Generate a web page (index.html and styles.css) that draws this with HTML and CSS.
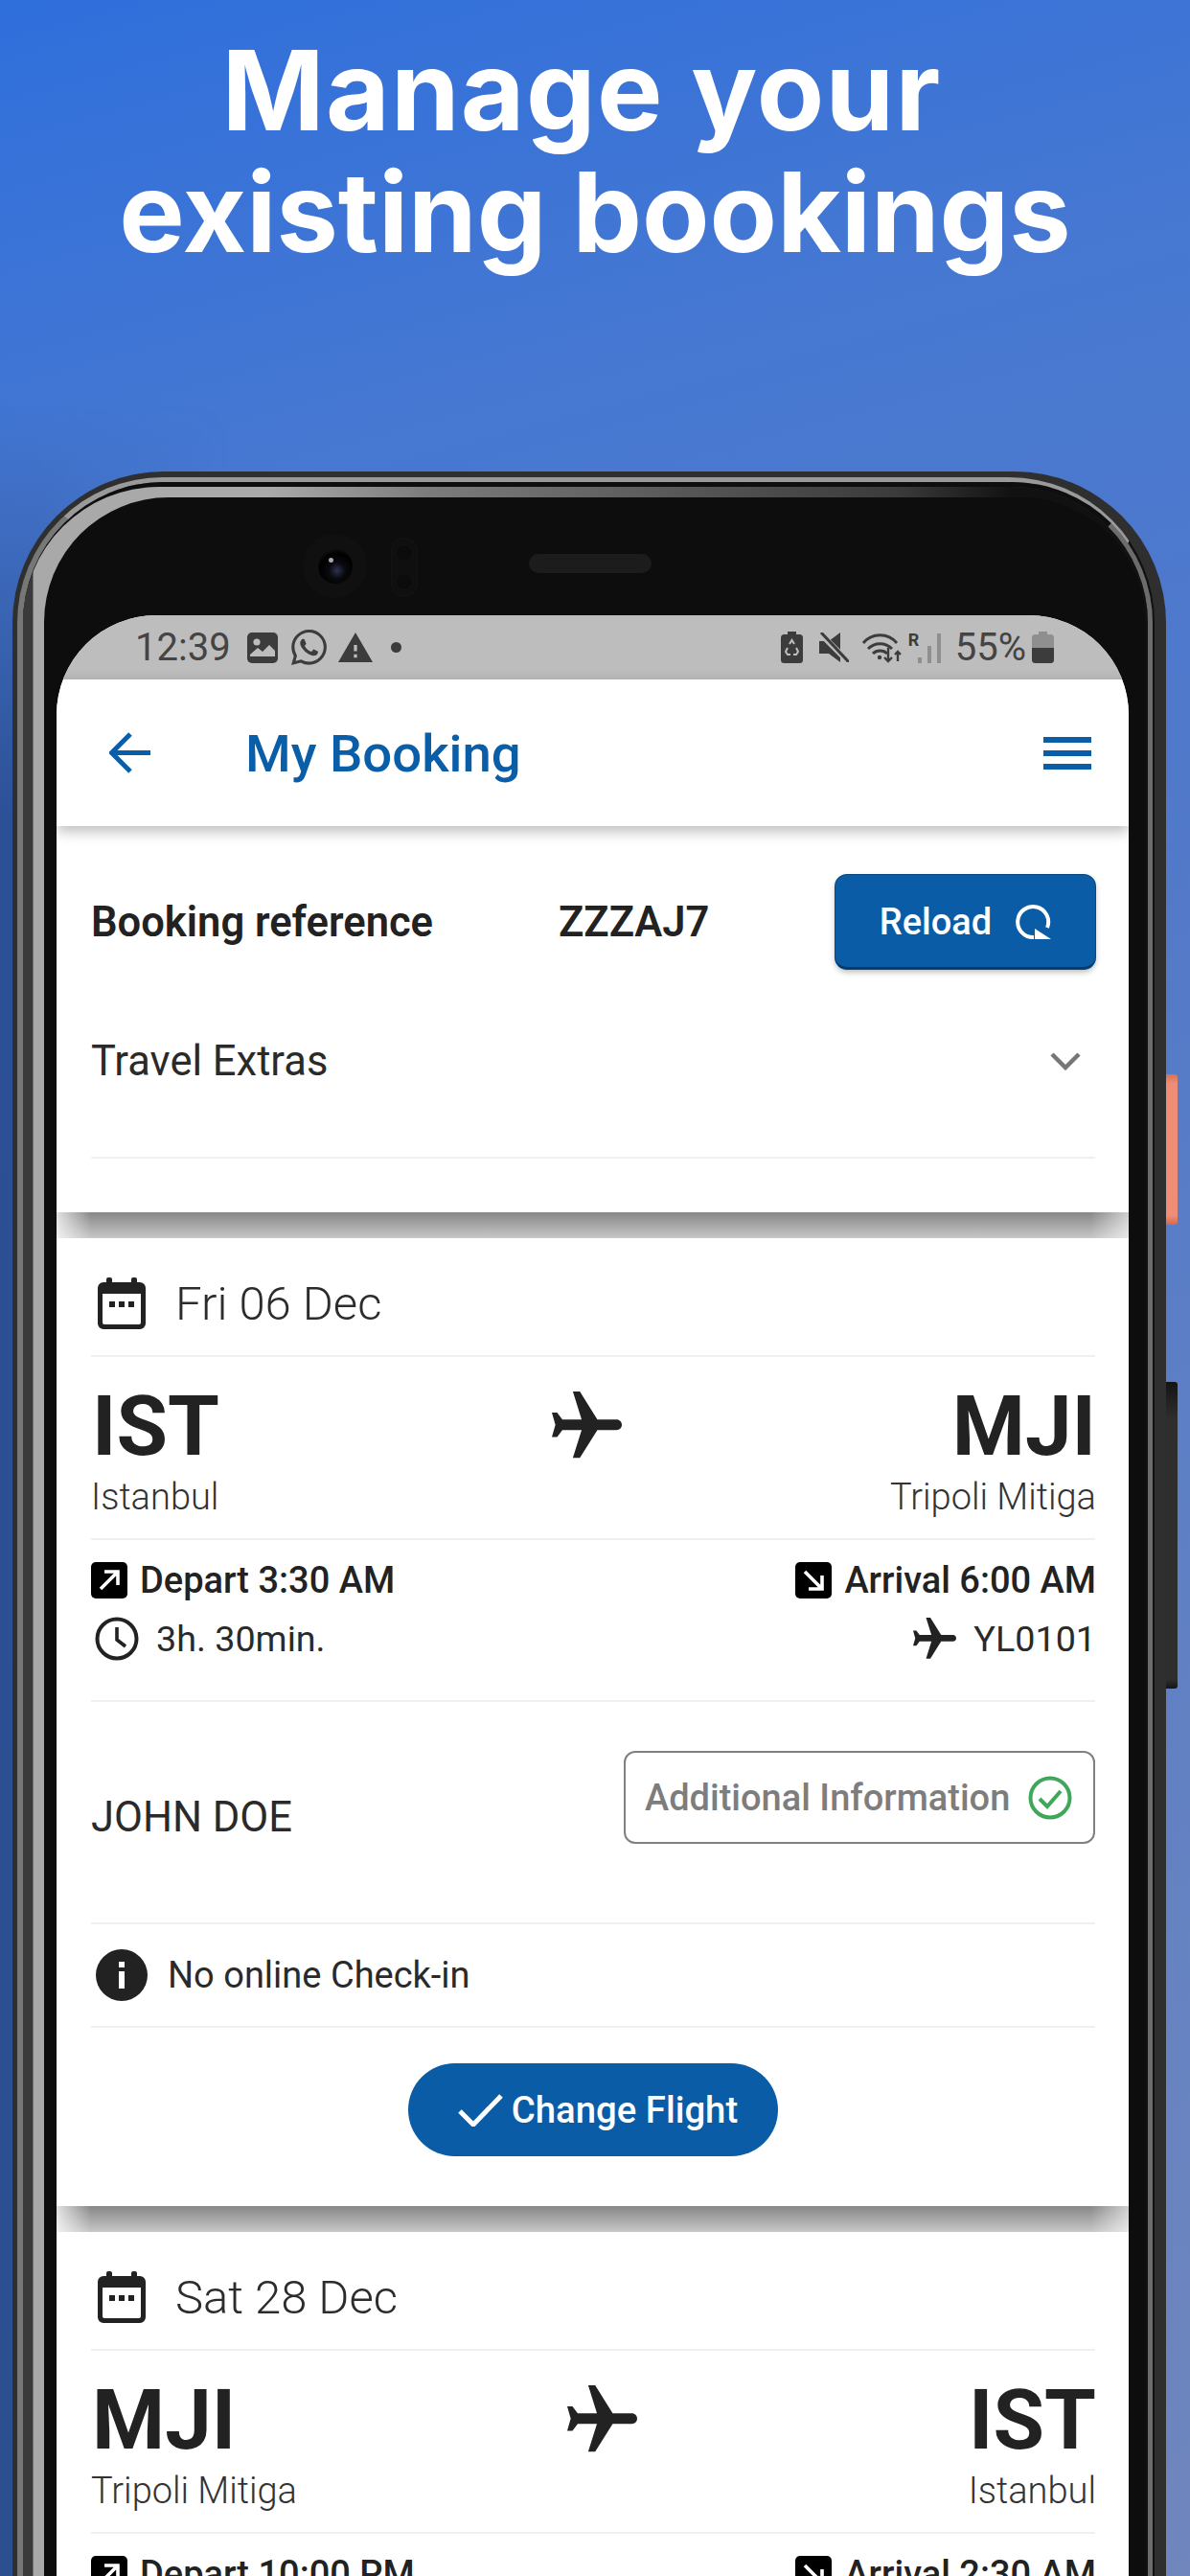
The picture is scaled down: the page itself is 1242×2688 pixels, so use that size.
FILE: index.html
```html
<!DOCTYPE html>
<html lang="en">
<head>
<meta charset="utf-8">
<title>Manage your existing bookings</title>
<link rel="stylesheet" href="styles.css">
</head>
<body>
<svg class="defs" width="0" height="0" aria-hidden="true">
  <symbol id="i-plane" viewBox="2 2 20 20"><path transform="rotate(90 12 12)" d="M21 16v-2l-8-5V3.5c0-.83-.67-1.5-1.5-1.5S10 2.67 10 3.5V9l-8 5v2l8-2.5V19l-2 1.5V22l3.5-1 3.5 1v-1.5L13 19v-5.5l8 2.5z"/></symbol>
  <symbol id="i-calendar" viewBox="0 0 50 54"><rect x="9" y="0" width="6" height="10" rx="2"/><rect x="35" y="0" width="6" height="10" rx="2"/><path fill-rule="evenodd" d="M6 5h38a6 6 0 0 1 6 6v37a6 6 0 0 1-6 6H6a6 6 0 0 1-6-6V11a6 6 0 0 1 6-6zM5 17v30a2 2 0 0 0 2 2h36a2 2 0 0 0 2-2V17z"/><rect x="12" y="25" width="6" height="6"/><rect x="22" y="25" width="6" height="6"/><rect x="32" y="25" width="6" height="6"/></symbol>
  <symbol id="i-depart" viewBox="0 0 38 38"><rect width="38" height="38" rx="5" fill="#000"/><path d="M10 28 27 11M14 10h14v14" fill="none" stroke="#fff" stroke-width="3.6"/></symbol>
  <symbol id="i-arrive" viewBox="0 0 38 38"><rect width="38" height="38" rx="5" fill="#000"/><path d="M10 10 27 27M28 14v14H14" fill="none" stroke="#fff" stroke-width="3.6"/></symbol>
  <symbol id="i-clock" viewBox="0 0 46 46"><circle cx="23" cy="23" r="20.5" fill="none" stroke="#222" stroke-width="4"/><path d="M23 11v13l9 7" fill="none" stroke="#222" stroke-width="3.6"/></symbol>
  <symbol id="i-info" viewBox="0 0 54 54"><circle cx="27" cy="27" r="27" fill="#222"/><rect x="24" y="23" width="6" height="18" fill="#fff"/><rect x="24" y="13" width="6" height="6" fill="#fff"/></symbol>
  <symbol id="i-check-circle" viewBox="0 0 46 46"><circle cx="23" cy="23" r="20.5" fill="none" stroke="#3ea75a" stroke-width="4"/><path d="M12 24l8 8 14-16" fill="none" stroke="#3ea75a" stroke-width="4"/></symbol>
</svg>

<header class="hero">
  <h1 class="hero-title"><span class="hero-line hero-line-first">Manage your</span><span class="hero-line">existing bookings</span></h1>
</header>

<div class="phone">
  <span class="side-key side-key-power"></span>
  <span class="side-key side-key-volume"></span>
  <div class="rim-outer">
    <div class="rim-mid">
      <div class="rim-inner">
        <div class="bezel">
          <div class="sensors">
            <div class="camera"><div class="lens"><span class="lens-glint"></span></div></div>
            <div class="sensor-pill"><span class="sensor-eye"></span><span class="sensor-eye"></span></div>
            <div class="speaker"></div>
          </div>
          <div class="screen">
            <div class="statusbar">
              <div class="status-group">
                <span class="status-time">12:39</span>
                <svg class="st-image" viewBox="0 0 32 32"><rect width="32" height="32" rx="5" fill="#3c3c3c"/><circle cx="10" cy="10" r="3.6" fill="#bdbdbd"/><path d="M3 23l8-7 5 4 7-7 6 6v6H3z" fill="#bdbdbd"/></svg>
                <svg class="st-whatsapp" viewBox="0 0 24 24"><path fill="#3c3c3c" d="M17.472 14.382c-.297-.149-1.758-.867-2.03-.967-.273-.099-.471-.148-.67.15-.197.297-.767.966-.94 1.164-.173.199-.347.223-.644.075-.297-.15-1.255-.463-2.39-1.475-.883-.788-1.48-1.761-1.653-2.059-.173-.297-.018-.458.13-.606.134-.133.298-.347.446-.52.149-.174.198-.298.298-.497.099-.198.05-.371-.025-.52-.075-.149-.669-1.612-.916-2.207-.242-.579-.487-.5-.669-.51-.173-.008-.371-.01-.57-.01-.198 0-.52.074-.792.372-.272.297-1.04 1.016-1.04 2.479 0 1.462 1.065 2.875 1.213 3.074.149.198 2.096 3.2 5.077 4.487.709.306 1.262.489 1.694.625.712.227 1.36.195 1.871.118.571-.085 1.758-.719 2.006-1.413.248-.694.248-1.289.173-1.413-.074-.124-.272-.198-.57-.347m-5.421 7.403h-.004a9.87 9.87 0 01-5.031-1.378l-.361-.214-3.741.982.998-3.648-.235-.374a9.86 9.86 0 01-1.51-5.26c.001-5.45 4.436-9.884 9.888-9.884 2.64 0 5.122 1.03 6.988 2.898a9.825 9.825 0 012.893 6.994c-.003 5.45-4.437 9.884-9.885 9.884m8.413-18.297A11.815 11.815 0 0012.05 0C5.495 0 .16 5.335.157 11.892c0 2.096.547 4.142 1.588 5.945L.057 24l6.305-1.654a11.882 11.882 0 005.683 1.448h.005c6.554 0 11.89-5.335 11.893-11.893a11.821 11.821 0 00-3.48-8.413z"/></svg>
                <svg class="st-warning" viewBox="1 2 22 19"><path fill="#3c3c3c" d="M1 21h22L12 2 1 21zm12-3h-2v-2h2v2zm0-4h-2v-4h2v4z"/></svg>
                <span class="status-dot"></span>
              </div>
              <div class="status-group">
                <svg class="st-recycle" viewBox="0 0 23 33"><path fill="#3c3c3c" d="M7 0h9v3h3.500a3.500 3.500 0 0 1 3.500 3.500V29.500a3.500 3.500 0 0 1-3.500 3.500h-16A3.500 3.500 0 0 1 0 29.500V6.500A3.500 3.500 0 0 1 3.500 3H7z"/><path fill="none" stroke="#bdbdbd" stroke-width="2" d="M9 13l2.500-4 2.500 4M16 17l2 4-2 3h-3M7 17l-2 4 2 3h3"/></svg>
                <svg class="st-mute" viewBox="0 0 31 31"><path fill="#3c3c3c" d="M22 0v31L10 22H0V9h10z"/><path stroke="#bdbdbd" stroke-width="6" d="M1 1l29 29"/><path stroke="#3c3c3c" stroke-width="3" d="M2 0l29 31"/></svg>
                <svg class="st-wifi" viewBox="0 0 42 32"><path fill="none" stroke="#3c3c3c" stroke-width="3" d="M1 11C10 0 27 0 36 11M6 17c7-7 18-7 25 0M11 22c4-4 11-4 15 0"/><circle cx="18" cy="26" r="2.200" fill="#3c3c3c"/><path fill="none" stroke="#3c3c3c" stroke-width="2.400" d="M27 16v14M23 26l4 4 4-4M37 30V20M34 23l3-3 3 3"/></svg>
                <div class="st-signal">
                  <span class="st-roaming">R</span>
                  <span class="bar bar-1"></span><span class="bar bar-2"></span><span class="bar bar-3"></span>
                </div>
                <span class="status-pct">55%</span>
                <svg class="st-battery" viewBox="0 0 23 33"><path fill="#8f8f8f" d="M7 0h9v3h3.500a3.500 3.500 0 0 1 3.500 3.500V17H0V6.500A3.500 3.500 0 0 1 3.500 3H7z"/><path fill="#3c3c3c" d="M0 17h23v12.500a3.500 3.500 0 0 1-3.500 3.500h-16A3.500 3.500 0 0 1 0 29.500z"/></svg>
              </div>
            </div>

            <div class="appbar">
              <svg class="appbar-back" viewBox="0 0 43 43"><path d="M43 21.500H3M22 2 2.500 21.500 22 41" fill="none" stroke="#0a5ea8" stroke-width="5"/></svg>
              <h2 class="appbar-title">My Booking</h2>
              <div class="hamburger"><span></span><span></span><span></span></div>
            </div>

            <section class="ref-panel">
              <div class="ref-row">
                <span class="ref-label">Booking reference</span>
                <span class="ref-label">ZZZAJ7</span>
                <button class="reload-btn">Reload
                  <svg class="reload-icon" viewBox="0 0 38 38"><path d="M20 35A16 16 0 1 1 34 25" fill="none" stroke="#fff" stroke-width="4"/><path d="M21 26l17 11H21z" fill="#fff"/></svg>
                </button>
              </div>
              <div class="extras-row">
                <span class="extras-text">Travel Extras</span>
                <svg class="chevron" viewBox="0 0 32 19"><path d="M2 2l14 14L30 2" fill="none" stroke="#767676" stroke-width="4.500"/></svg>
              </div>
            </section>
            <div class="band"></div>

            <section class="flight">
              <div class="date-row">
                <svg class="date-icon"><use href="#i-calendar"/></svg>
                <span class="date-text">Fri 06 Dec</span>
              </div>
              <div class="route">
                <div class="port"><div class="port-code">IST</div><div class="port-city">Istanbul</div></div>
                <div class="route-plane route-plane-out"><svg class="plane-icon"><use href="#i-plane"/></svg></div>
                <div class="port port-end"><div class="port-code">MJI</div><div class="port-city">Tripoli Mitiga</div></div>
              </div>
              <div class="times">
                <div class="times-row">
                  <div class="time-item"><svg class="dir-icon"><use href="#i-depart"/></svg><span class="time-strong">Depart 3:30 AM</span></div>
                  <div class="time-item"><svg class="dir-icon"><use href="#i-arrive"/></svg><span class="time-strong">Arrival 6:00 AM</span></div>
                </div>
                <div class="times-row times-row-second">
                  <div class="time-item time-item-wide"><svg class="clock-icon"><use href="#i-clock"/></svg><span class="time-plain">3h. 30min.</span></div>
                  <div class="time-item time-item-wide"><svg class="small-plane"><use href="#i-plane"/></svg><span class="time-plain">YL0101</span></div>
                </div>
              </div>
              <div class="passenger">
                <span class="passenger-name">JOHN DOE</span>
                <button class="info-btn">Additional Information<svg class="info-btn-icon"><use href="#i-check-circle"/></svg></button>
              </div>
              <div class="notice">
                <svg class="notice-icon"><use href="#i-info"/></svg>
                <span class="notice-text">No online Check-in</span>
              </div>
              <div class="action">
                <button class="change-btn">
                  <svg class="change-icon" viewBox="0 0 47 34"><path d="M2 18l14 14L45 2" fill="none" stroke="#fff" stroke-width="5"/></svg>Change Flight
                </button>
              </div>
            </section>
            <div class="band"></div>

            <section class="flight">
              <div class="date-row">
                <svg class="date-icon"><use href="#i-calendar"/></svg>
                <span class="date-text">Sat 28 Dec</span>
              </div>
              <div class="route">
                <div class="port"><div class="port-code">MJI</div><div class="port-city">Tripoli Mitiga</div></div>
                <div class="route-plane route-plane-back"><svg class="plane-icon"><use href="#i-plane"/></svg></div>
                <div class="port port-end"><div class="port-code">IST</div><div class="port-city">Istanbul</div></div>
              </div>
              <div class="times">
                <div class="times-row">
                  <div class="time-item"><svg class="dir-icon"><use href="#i-depart"/></svg><span class="time-strong">Depart 10:00 PM</span></div>
                  <div class="time-item"><svg class="dir-icon"><use href="#i-arrive"/></svg><span class="time-strong">Arrival 2:30 AM</span></div>
                </div>
              </div>
            </section>
          </div>
        </div>
      </div>
    </div>
  </div>
</div>
</body>
</html>
```

FILE: styles.css
```css
* { box-sizing: border-box; }
html, body { margin: 0; padding: 0; }
body {
  position: relative;
  width: 1242px;
  height: 2688px;
  overflow: hidden;
  font-family: Roboto, "Liberation Sans", sans-serif;
  color: #222;
  background: linear-gradient(165deg, #2f6fdc 0%, #4678d2 18%, #5279c9 40%, #5f80c4 65%, #7086bd 100%);
}
/* darker glow the backdrop has along its lower-left edge, behind the phone */
body::before {
  content: "";
  position: absolute;
  left: 0;
  top: 420px;
  width: 240px;
  height: 2268px;
  background: linear-gradient(180deg, rgba(44,80,150,0) 0, #2c5096 440px, #2c4f90 100%);
  -webkit-mask-image: linear-gradient(90deg, #000 0, #000 40px, transparent 100%);
  mask-image: linear-gradient(90deg, #000 0, #000 40px, transparent 100%);
}
.defs { position: absolute; }

/* Hero */
.hero { height: 492px; padding-top: 31px; }
.hero-title {
  margin: 0;
  font-family: Inter, sans-serif;
  font-size: 115px;
  line-height: 127px;
  font-weight: 700;
  color: #fff;
  text-align: center;
  letter-spacing: 0;
}
.hero-line { display: block; }
.hero-line-first { padding-right: 28px; letter-spacing: 1.300px; }

/* Phone shell */
.phone {
  position: relative;
  width: 1204px;
  margin-left: 13px;
  padding: 6px 12px 0 5px;
  background: #2f2f2f;
  border-radius: 158px 158px 0 0;
}
.side-key { position: absolute; left: 100%; width: 12px; border-radius: 0 3px 3px 0; }
.side-key-power { top: 629px; height: 157px; background: linear-gradient(180deg, #d96f55 0, #ef8d76 6%, #ef8d76 94%, #d5684e 100%); }
.side-key-volume { top: 950px; height: 320px; background: linear-gradient(180deg, #141414 0, #2e2e2e 12%, #2e2e2e 97%, #151515 100%); }
.rim-outer {
  border-style: solid;
  border-width: 5px 2px 0 6px;
  border-color: #9a9a9a #111 #000 #777;
  border-radius: 152px 152px 0 0;
}
.rim-mid {
  border-style: solid;
  border-width: 5px 5px 0 0;
  border-color: #0e0e0e #6c6c6c #000 #000;
  border-radius: 147px 147px 0 0;
}
.rim-inner {
  padding: 11px 3px 0 22px;
  background: linear-gradient(90deg, #3a3a3a 0, #3a3a3a 10px, #a9a9a9 11px, #a9a9a9 22%, #7c7c7c 36%, #555 60%, #3a3a3a 78%, #111 88%);
  border-radius: 142px 142px 0 0;
}
.bezel {
  padding: 0 17px 0 13px;
  background: #0d0d0d;
  border-radius: 130px 130px 0 0;
}
.sensors { display: flex; align-items: center; height: 123px; padding: 20px 0 0 257px; }
.camera {
  display: flex; align-items: center; justify-content: center;
  width: 67px; height: 67px; border-radius: 50%;
  background: #101010;
}
.lens {
  position: relative;
  width: 36px; height: 36px; border-radius: 50%;
  background: radial-gradient(circle at 55% 62%, #2e3350 0, #0a0a0e 28%, #000 60%, #262626 100%);
}
.lens-glint { position: absolute; left: 11px; top: 9px; width: 5px; height: 5px; border-radius: 50%; background: #a9a9a9; }
.sensor-pill {
  display: flex; flex-direction: column; align-items: center; justify-content: space-around;
  width: 28px; height: 62px; margin-left: 25px; margin-top: 2px;
  border-radius: 14px; background: #0f0f0f; border: 1px solid #141414;
}
.sensor-eye { width: 18px; height: 18px; border-radius: 50%; background: #0b0b0b; border: 1px solid #141414; }
.speaker {
  width: 128px; height: 20px; margin-left: 116px; margin-top: -6px;
  border-radius: 10px;
  background: #1c1c1c;
}

/* Screen */
.screen {
  height: 2200px;
  overflow: hidden;
  background: #fff;
  border-radius: 104px 104px 0 0;
}
.statusbar {
  display: flex;
  justify-content: space-between;
  align-items: center;
  height: 67px;
  padding: 0 78px 0 82px;
  background: #bdbdbd;
  color: #444;
}
.status-group { display: flex; align-items: center; height: 34px; }
.status-time { font-size: 40px; line-height: 34px; margin-right: 17px; }
.status-pct { font-size: 40px; line-height: 34px; margin-left: 15px; margin-right: 6px; }
.st-image { width: 32px; height: 32px; margin-right: 14px; }
.st-whatsapp { width: 37px; height: 37px; margin-right: 12px; }
.st-warning { width: 36px; height: 33px; margin-right: 19px; }
.status-dot { width: 11px; height: 11px; border-radius: 50%; background: #3c3c3c; }
.st-recycle { width: 23px; height: 33px; margin-right: 17px; }
.st-mute { width: 31px; height: 31px; margin-right: 14px; }
.st-wifi { width: 42px; height: 32px; margin-right: 5px; }
.st-battery { width: 23px; height: 33px; }
.st-signal { position: relative; display: flex; align-items: flex-end; gap: 6px; width: 35px; height: 32px; padding-left: 5px; justify-content: flex-end; }
.st-roaming { position: absolute; left: 1px; top: -2px; font-size: 18px; line-height: 20px; font-weight: 700; color: #3c3c3c; }
.bar { width: 4px; background: #8f8f8f; }
.bar-1 { height: 6px; }
.bar-2 { height: 18px; }
.bar-3 { height: 31px; }

.appbar {
  position: relative;
  z-index: 1;
  display: flex;
  align-items: center;
  height: 153px;
  padding: 0 39px 0 55px;
  background: #fff;
  box-shadow: 0 5px 14px rgba(0,0,0,.28);
}
.appbar-back { width: 43px; height: 43px; margin-right: 99px; }
.appbar-title { flex: 1; margin: 0; font-size: 54.500px; font-weight: 500; color: #0a5ea8; line-height: 60px; }
.hamburger { display: flex; flex-direction: column; gap: 8px; width: 50px; }
.hamburger span { height: 6px; background: #0a5ea8; }

/* Reference panel */
.ref-panel { padding: 51px 35px 56px 36px; background: #fff; }
.ref-row { display: grid; grid-template-columns: 488px 1fr auto; align-items: center; height: 98px; }
.ref-label { font-size: 43.500px; font-weight: 600; color: #222; }
.reload-btn {
  display: flex; align-items: center; justify-content: center; gap: 24px;
  width: 271px; height: 98px;
  padding-top: 2px;
  border: 0;
  border-bottom: 2px solid #053a6d;
  border-radius: 12px;
  background: #0a5ca6;
  box-shadow: 0 0 0 1px #08477f, 0 3px 6px rgba(0,0,0,.3);
  color: #fff;
  font: 500 38px Roboto, sans-serif;
}
.reload-icon { width: 38px; height: 38px; }
.extras-row {
  display: flex; align-items: center; justify-content: space-between;
  height: 198px;
  padding: 0 15px 3px 0;
  border-bottom: 2px solid #f0f0f0;
}
.extras-text { font-size: 43.500px; color: #2a2a2a; }
.chevron { width: 32px; height: 19px; }
.band {
  height: 27px;
  background:
    linear-gradient(90deg, rgba(255,255,255,.75) 0, rgba(255,255,255,0) 36px, rgba(255,255,255,0) calc(100% - 40px), rgba(255,255,255,.6) 100%),
    linear-gradient(180deg, #878787 0, #c7c7c7 100%);
}

/* Flight card */
.flight { padding: 0 35px 52px 36px; background: #fff; }
.date-row {
  display: flex; align-items: center;
  height: 124px;
  padding: 14px 0 0 7px;
  border-bottom: 2px solid #f0f0f0;
}
.date-icon { width: 50px; height: 54px; margin-right: 31px; fill: #222; }
.date-text { font-size: 49px; font-weight: 300; color: #2c2c2c; }
.route {
  display: flex; justify-content: space-between; align-items: flex-start;
  height: 191px;
  padding-top: 29px;
  border-bottom: 2px solid #f0f0f0;
}
.port-code { font-size: 87px; line-height: 86px; font-weight: 700; color: #222; padding-left: 1px; }
.port-city { font-size: 38px; line-height: 44px; font-weight: 300; color: #333; margin-top: 9px; }
.port-end { text-align: right; margin-right: -1px; }
.port-end .port-code { padding: 0; }
.route-plane { display: flex; margin-top: 7px; }
.route-plane-out { padding-left: 68px; }
.route-plane-back { padding-right: 64px; }
.plane-icon { width: 73px; height: 73px; fill: #222; }
.times {
  height: 169px;
  padding-top: 23px;
  border-bottom: 2px solid #f0f0f0;
}
.times-row { display: flex; justify-content: space-between; align-items: center; height: 38px; margin-right: -1px; }
.times-row-second { height: 46px; margin-top: 19px; }
.time-item { display: flex; align-items: center; gap: 13px; }
.time-item-wide { gap: 18px; }
.dir-icon { width: 38px; height: 38px; }
.time-strong { font-size: 38px; font-weight: 500; color: #222; }
.time-plain { font-size: 37.700px; color: #2a2a2a; }
.clock-icon { width: 46px; height: 46px; margin-left: 4px; }
.small-plane { width: 45px; height: 45px; fill: #222; }
.passenger {
  display: flex; justify-content: space-between; align-items: flex-start;
  height: 232px;
  padding-top: 51px;
  border-bottom: 2px solid #f0f0f0;
}
.passenger-name { margin-top: 46px; font-size: 43.500px; line-height: 48px; color: #2a2a2a; }
.info-btn {
  display: flex; align-items: center; justify-content: space-between;
  width: 492px; height: 97px;
  padding: 0 22px 0 20px;
  background: #fff;
  border: 2.500px solid #808080;
  border-radius: 12px;
  color: #7d7d7d;
  font: 500 38px Roboto, sans-serif;
}
.info-btn-icon { width: 46px; height: 46px; }
.notice {
  display: flex; align-items: center;
  height: 108px;
  padding-left: 5px;
  border-bottom: 2px solid #f0f0f0;
}
.notice-icon { width: 54px; height: 54px; margin-right: 21px; }
.notice-text { font-size: 38px; color: #2a2a2a; }
.action { display: flex; justify-content: center; padding-top: 37px; }
.change-btn {
  display: flex; align-items: center; justify-content: center; gap: 9px;
  width: 386px; height: 97px;
  padding: 0 0 0 10px;
  border: 0;
  border-radius: 49px;
  background: #0a5ca6;
  color: #fff;
  font: 500 38.300px Roboto, sans-serif;
}
.change-icon { width: 47px; height: 34px; }
```
